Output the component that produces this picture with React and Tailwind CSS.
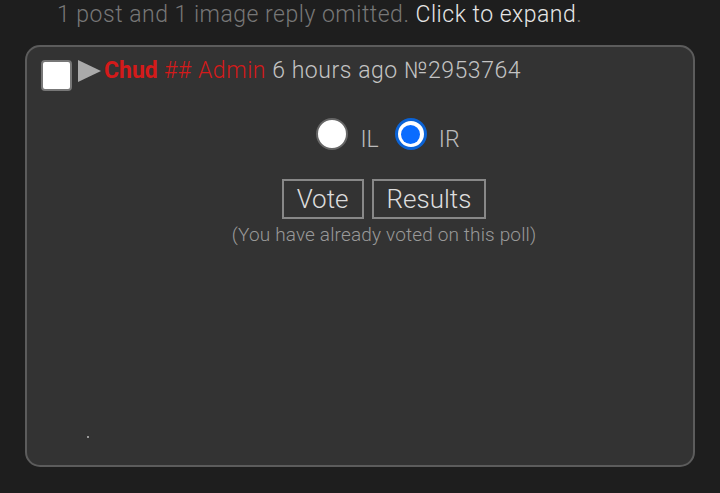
export default function App() {
  return (
    <div className="min-h-[493px] w-[720px] bg-[#1e1e1e] font-['Roboto',sans-serif] font-light overflow-hidden">
      <div className="pl-[57px] text-[23px] tracking-[0.5px] leading-[30px] text-[#777]">
        1 post and 1 image reply omitted. <span className="text-[#e6e6e6]">Click to expand</span>.
      </div>
      <div className="ml-[25px] mt-[15px] w-[670px] h-[422px] rounded-[15px] border-2 border-[#5c5c5c] bg-[#333] relative">
        <div className="flex items-start pl-[14px] pt-[13px]">
          <div className="w-[31px] h-[31px] rounded-[4px] bg-white border-2 border-[#777]" />
          <svg width="24" height="24" viewBox="0 0 24 24" className="ml-[6px]">
            <polygon points="0,0 23,11 0,22" fill="#aaa" />
          </svg>
          <div className="ml-[2px] mt-[-4px] text-[23px] tracking-[0.55px] leading-[30px] whitespace-nowrap">
            <span className="font-bold tracking-[0px] text-[#d41a1a]">Chud</span>{' '}
            <span className="text-[#d41a1a]">## Admin</span>{' '}
            <span className="text-[#c4c4c4]">6 hours ago №2953764</span>
          </div>
        </div>
        <div className="flex flex-col items-center pl-[48px] mt-[27px]">
          <div className="flex items-end ml-[8px] text-[23px] leading-none text-[#bbb]">
            <span className="w-[32px] h-[32px] rounded-full bg-white border-2 border-[#666]" />
            <span className="ml-[12px] mb-[-1px]">IL</span>
            <span className="ml-[16px] w-[32px] h-[32px] rounded-full bg-white border-[3px] border-[#0b63d6] flex items-center justify-center">
              <span className="w-[19px] h-[19px] rounded-full bg-[#0a6cff]" />
            </span>
            <span className="ml-[12px] mb-[-1px]">IR</span>
          </div>
          <div className="flex gap-[8px] mt-[29px]">
            <div className="h-[40px] px-[13px] border-2 border-[#888] text-[26px] leading-[36px] text-[#ddd]">Vote</div>
            <div className="h-[40px] px-[13px] border-2 border-[#888] text-[26px] leading-[36px] text-[#ddd]">Results</div>
          </div>
          <div className="mt-[5px] text-[19px] tracking-[0.15px] leading-[22px] text-[#999]">(You have already voted on this poll)</div>
        </div>
        <div className="absolute left-[60px] top-[389px] w-[2px] h-[2px] bg-[#999]" />
      </div>
    </div>
  );
}
